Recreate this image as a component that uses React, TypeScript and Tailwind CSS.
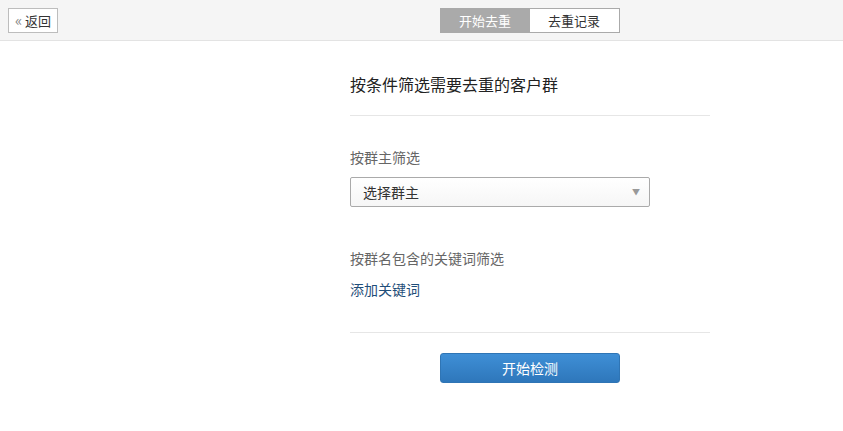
import React from 'react';

const App: React.FC = () => {
  return (
    <div
      className="w-full min-h-screen bg-white text-[#333]"
      style={{ fontFamily: '"Microsoft YaHei", "Noto Sans CJK SC", "Liberation Sans", sans-serif' }}
    >
      {/* 顶部栏 */}
      <div className="relative h-[41px] bg-[#f5f5f5] border-b border-[#e3e3e3]">
        <button className="absolute left-[8px] top-[8px] w-[50px] h-[25px] flex items-center justify-center gap-[3px] bg-white border border-[#bdbdbd] text-[13px] text-[#333] leading-none">
          <span className="text-[15px] text-[#888] -mt-[2px]">«</span>
          返回
        </button>
        <div className="flex justify-center pt-[8px] pl-[216px]">
          <div className="flex h-[25px] border border-[#aaa]">
            <div className="w-[89px] flex items-center justify-center bg-[#aaaaaa] text-white text-[13px]">开始去重</div>
            <div className="w-[89px] flex items-center justify-center bg-white text-[#333] text-[13px]">去重记录</div>
          </div>
        </div>
      </div>

      {/* 主体 */}
      <div className="w-[360px] ml-[350px]">
        <div className="pt-[31px] pb-[19px] border-b border-[#e6e6e6] text-[16px] text-[#222] leading-[24px]">
          按条件筛选需要去重的客户群
        </div>

        <div className="pt-[31px] text-[14px] text-[#666] leading-[20px]">按群主筛选</div>
        <div className="mt-[10px] w-[300px] h-[30px] flex items-center justify-between pl-[12px] pr-[9px] border border-[#aaa] rounded-[2px] bg-gradient-to-b from-white to-[#f6f6f6] text-[14px] text-[#333]">
          <span>选择群主</span>
          <span className="text-[8px] text-[#999]">▼</span>
        </div>

        <div className="pt-[41px] text-[14px] text-[#666] leading-[20px]">按群名包含的关键词筛选</div>
        <div className="pt-[11px] pb-[33px] border-b border-[#e6e6e6] text-[14px] text-[#1f4e79] leading-[20px]">
          添加关键词
        </div>

        <div className="pt-[20px] flex">
          <button className="ml-[90px] w-[180px] h-[30px] rounded-[3px] bg-gradient-to-b from-[#3f8fd6] to-[#2e77bb] border border-[#2f75b5] text-white text-[14px]">
            开始检测
          </button>
        </div>
      </div>
    </div>
  );
};

export default App;
